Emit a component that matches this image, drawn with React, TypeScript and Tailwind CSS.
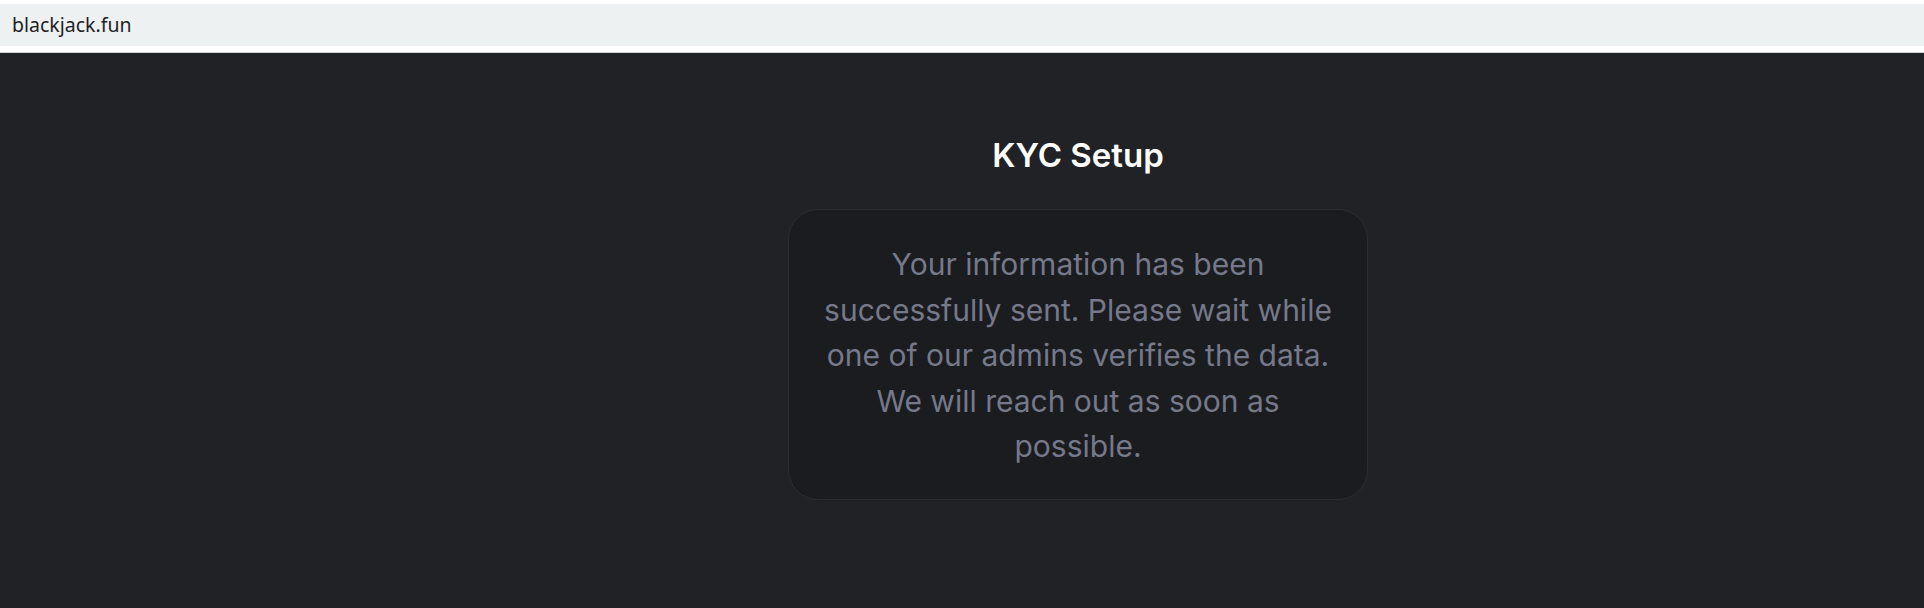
export default function App() {
  return (
    <div className="min-h-[608px] flex flex-col bg-[#212226]">
      <div className="h-[53px] bg-white border-b border-[#cfd1d3] pt-1">
        <div className="h-[42px] bg-[#eef1f2] flex items-center pl-3">
          <span className="text-[19.5px] text-[#1f1f1f]" style={{ fontFamily: '"Noto Sans", "Open Sans", sans-serif' }}>
            blackjack.fun
          </span>
        </div>
      </div>
      <div className="flex-1 flex flex-row">
        <div className="w-[232px] shrink-0" />
        <div className="flex-1 flex flex-col items-center pt-[82px]">
          <h1
            className="text-[33px] leading-[40px] font-semibold text-white"
            style={{ fontFamily: 'Inter, "Noto Sans", sans-serif' }}
          >
            KYC Setup
          </h1>
          <div className="mt-[34px] w-[580px] rounded-[30px] border border-[#2c2d33] bg-[#1b1c20] px-8 pt-8 pb-[29px]">
            <p
              className="text-center text-[30px] leading-[45.5px] text-[#757989]"
              style={{ fontFamily: 'Inter, "Noto Sans", sans-serif' }}
            >
              Your information has been successfully sent. Please wait while one of our admins verifies the data. We will reach out as soon as possible.
            </p>
          </div>
        </div>
      </div>
    </div>
  );
}
